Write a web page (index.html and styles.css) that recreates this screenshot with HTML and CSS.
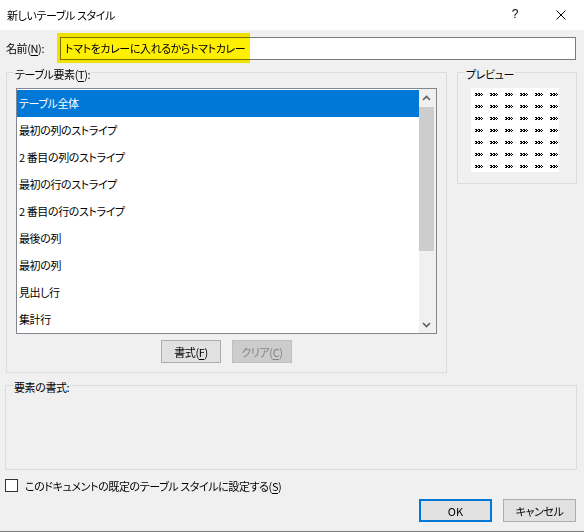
FILE: index.html
```html
<!DOCTYPE html>
<html lang="ja">
<head>
    <meta charset="UTF-8">
    <title>新しいテーブル スタイル</title>
    <link rel="stylesheet" href="styles.css">
</head>
<body>
<div class="dialog">
    <div class="titlebar">
        <span class="title">新しいテーブル スタイル</span>
        <span class="caption-btn help">?</span>
        <span class="caption-btn close">
            <svg width="10" height="10" viewBox="0 0 10 10"><path d="M0.5 0.5 L9.5 9.5 M9.5 0.5 L0.5 9.5" stroke="#000" stroke-width="1" fill="none"/></svg>
        </span>
    </div>

    <div class="name-row">
        <label class="name-label" for="style-name">名前(<u>N</u>):</label>
        <div class="name-input" id="style-name">トマトをカレーに入れるからトマトカレー</div>
        <span class="highlight"></span>
    </div>

    <div class="main-row">
        <div class="group elements-group">
            <span class="group-label">テーブル要素(<u>T</u>):</span>
            <div class="listbox">
                <ul class="list-items">
                    <li class="selected">テーブル全体</li>
                    <li>最初の列のストライプ</li>
                    <li>2 番目の列のストライプ</li>
                    <li>最初の行のストライプ</li>
                    <li>2 番目の行のストライプ</li>
                    <li>最後の列</li>
                    <li>最初の列</li>
                    <li>見出し行</li>
                    <li>集計行</li>
                </ul>
                <div class="scrollbar">
                    <div class="scroll-btn">
                        <svg width="9" height="6" viewBox="0 0 9 6"><path d="M1 5 L4.5 1.5 L8 5" stroke="#606060" stroke-width="1.6" fill="none"/></svg>
                    </div>
                    <div class="scroll-track"><div class="scroll-thumb"></div></div>
                    <div class="scroll-btn">
                        <svg width="9" height="6" viewBox="0 0 9 6"><path d="M1 1 L4.5 4.5 L8 1" stroke="#606060" stroke-width="1.6" fill="none"/></svg>
                    </div>
                </div>
            </div>
            <div class="list-buttons">
                <button class="btn">書式(<u>F</u>)</button>
                <button class="btn" disabled>クリア(<u>C</u>)</button>
            </div>
        </div>

        <div class="group preview-group">
            <span class="group-label">プレビュー</span>
            <svg class="preview" width="88" height="84" viewBox="0 0 88 84">
                <defs>
                    <pattern id="cell" x="4" y="5" width="15" height="12" patternUnits="userSpaceOnUse">
                        <path d="M0 0h2v1h-2z M3 0h2v1h-2z M6 0h1v1h-1z
                                 M1 1h2v1h-2z M4 1h2v1h-2z M7 1h1v1h-1z
                                 M0 2h2v1h-2z M3 2h2v1h-2z M6 2h1v1h-1z" fill="#000"/>
                    </pattern>
                </defs>
                <rect width="88" height="84" fill="#fff"/>
                <rect x="4" y="5" width="83" height="77" fill="url(#cell)"/>
            </svg>
        </div>
    </div>

    <div class="group format-group">
        <span class="group-label">要素の書式:</span>
    </div>

    <div class="check-row">
        <span class="checkbox"></span>
        <span class="check-text">このドキュメントの既定のテーブル スタイルに設定する(<u>S</u>)</span>
    </div>

    <div class="dialog-buttons">
        <button class="btn btn-wide default">OK</button>
        <button class="btn btn-wide">キャンセル</button>
    </div>
</div>
</body>
</html>
```

FILE: styles.css
```css
body {
    margin: 0;
    padding: 0;
    font-family: 'Noto Sans CJK JP', 'Noto Sans', sans-serif;
    font-size: 11px;
    letter-spacing: -0.4px;
    font-feature-settings: "palt";
    color: #000;
    background: #f0f0f0;
}

.dialog {
    width: 584px;
    height: 532px;
    box-sizing: border-box;
    border-bottom: 1px solid #7a7a7a;
    display: flex;
    flex-direction: column;
    background: #f0f0f0;
}

u {
    text-decoration: underline;
    text-underline-offset: 2px;
}

/* title bar */
.titlebar {
    height: 30px;
    background: #fff;
    display: flex;
    align-items: center;
    padding-left: 7px;
    flex-shrink: 0;
}

.title {
    flex: 1;
    line-height: 16px;
}

.caption-btn {
    width: 46px;
    height: 30px;
    display: flex;
    align-items: center;
    justify-content: center;
}

.help {
    font-family: 'Liberation Sans', sans-serif;
    font-size: 12px;
    letter-spacing: 0;
    padding-bottom: 2px;
    box-sizing: border-box;
}

/* name */
.name-row {
    position: relative;
    margin-top: 7px;
    height: 23px;
    display: flex;
    align-items: center;
    padding: 0 8px 0 6px;
}

.name-label {
    width: 54px;
    line-height: 16px;
    padding-bottom: 1px;
}

.name-input {
    flex: 1;
    height: 23px;
    box-sizing: border-box;
    border: 1px solid #7a7a7a;
    background: #fff;
    padding-left: 4px;
    line-height: 20px;
}

.highlight {
    position: absolute;
    left: 57px;
    top: -4px;
    width: 193px;
    height: 30px;
    background: #ffef00;
    mix-blend-mode: multiply;
}

/* groups */
.main-row {
    display: flex;
    align-items: flex-start;
    margin-top: 12px;
}

.group {
    position: relative;
    box-sizing: border-box;
    border: 1px solid #dcdcdc;
}

.group-label {
    position: absolute;
    top: -7px;
    left: 7px;
    padding: 0 1px;
    line-height: 16px;
    background: #f0f0f0;
}

.elements-group {
    margin-left: 6px;
    width: 441px;
    height: 301px;
    padding: 15px 0 0 9px;
}

.listbox {
    width: 421px;
    height: 246px;
    box-sizing: border-box;
    border: 1px solid #828790;
    background: #fff;
    display: flex;
}

.list-items {
    list-style: none;
    margin: 0;
    padding: 1px 0 0 0;
    width: 402px;
}

.list-items li {
    height: 27px;
    line-height: 27px;
    padding-left: 2px;
    white-space: nowrap;
}

.list-items li.selected {
    background: #0078d7;
    color: #fff;
}

.scrollbar {
    width: 17px;
    background: #f0f0f0;
    display: flex;
    flex-direction: column;
}

.scroll-btn {
    height: 17px;
    display: flex;
    align-items: center;
    justify-content: center;
    padding-right: 2px;
}

.scroll-track {
    flex: 1;
    padding: 1px 2px 0 0;
}

.scroll-thumb {
    height: 144px;
    background: #cdcdcd;
}

.list-buttons {
    width: 421px;
    display: flex;
    justify-content: center;
    gap: 11px;
    margin-top: 6px;
}

.btn {
    width: 60px;
    height: 23px;
    box-sizing: border-box;
    border: 1px solid #adadad;
    background: #e1e1e1;
    font-family: inherit;
    font-size: 11px;
    letter-spacing: -0.4px;
    font-feature-settings: "palt";
    color: #000;
    padding: 0;
    line-height: 18px;
}

.btn:disabled {
    color: #838383;
    border-color: #bfbfbf;
    background: #cccccc;
}

.preview-group {
    margin-left: 10px;
    width: 120px;
    height: 112px;
    padding: 15px 0 0 13px;
}

.preview {
    display: block;
}

.format-group {
    margin-top: 12px;
    margin-left: 5px;
    width: 572px;
    height: 85px;
}

/* checkbox */
.check-row {
    display: flex;
    align-items: center;
    margin-top: 9px;
    margin-left: 5px;
    height: 13px;
}

.checkbox {
    width: 13px;
    height: 13px;
    box-sizing: border-box;
    border: 1px solid #333;
    background: #fff;
}

.check-text {
    margin-left: 7px;
    line-height: 16px;
}

/* bottom buttons */
.dialog-buttons {
    display: flex;
    justify-content: flex-end;
    gap: 11px;
    margin-top: 7px;
    padding-right: 8px;
}

.btn-wide {
    width: 73px;
}

.btn.default {
    border: 2px solid #0078d7;
    letter-spacing: 0;
}
```
